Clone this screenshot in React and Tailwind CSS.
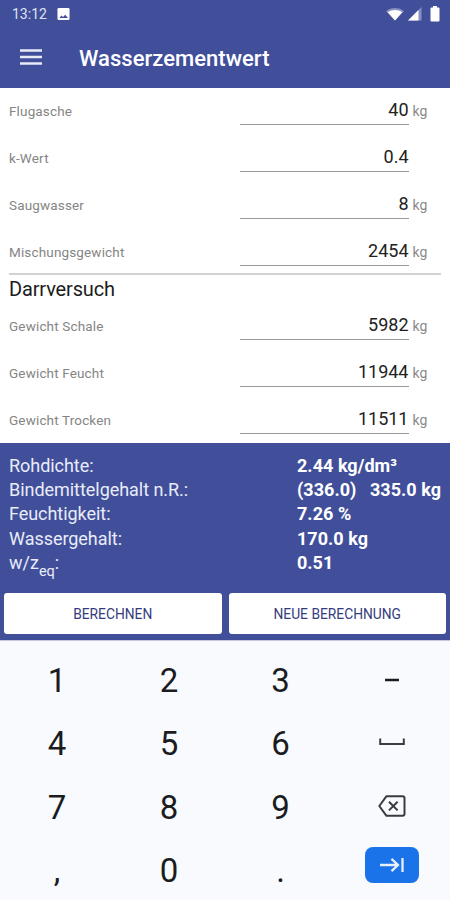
import React, { useState } from "react";

const mischung = [
  { label: "Flugasche", wert: "40", einheit: "kg" },
  { label: "k-Wert", wert: "0.4", einheit: "" },
  { label: "Saugwasser", wert: "8", einheit: "kg" },
  { label: "Mischungsgewicht", wert: "2454", einheit: "kg" },
];

const darrversuch = [
  { label: "Gewicht Schale", wert: "5982", einheit: "kg" },
  { label: "Gewicht Feucht", wert: "11944", einheit: "kg" },
  { label: "Gewicht Trocken", wert: "11511", einheit: "kg" },
];

const ergebnisse = [
  { label: "Rohdichte:", wert: "2.44 kg/dm³" },
  { label: "Bindemittelgehalt n.R.:", wert: "(336.0)   335.0 kg" },
  { label: "Feuchtigkeit:", wert: "7.26 %" },
  { label: "Wassergehalt:", wert: "170.0 kg" },
];

function StatusBar() {
  return (
    <div className="flex h-7 items-center justify-between pl-3 pr-[10px] text-white">
      <div className="flex items-center gap-[10px]">
        <span className="text-[14px] leading-7 text-[#dfe3f3]">13:12</span>
        <svg width="13" height="14" viewBox="0 0 14 14" className="mb-px">
          <rect x="0.5" y="0.5" width="13" height="13" rx="1.5" fill="#fff" />
          <path d="M2.500 11.300l2.400-2.600 1.600 1.500L8.900 7.800 11.800 11.300z" fill="#414f9b" />
        </svg>
      </div>
      <div className="flex items-center">
        <svg width="18" height="14" viewBox="0 0 18 14">
          <path d="M0 4.200C5 0 13 0 18 4.200L9 13.500z" fill="#8790c0" />
          <path d="M1.800 5.300C6 2.300 12 2.300 16.200 5.300L9 13.500z" fill="#fff" />
        </svg>
        <svg width="14" height="14" viewBox="0 0 14 14" className="ml-1">
          <path d="M0 13.500L13.500 0v13.500z" fill="#8790c0" />
          <path d="M0 13.500L10.500 3v10.500z" fill="#fff" />
        </svg>
        <svg width="10" height="16" viewBox="0 0 10 16" className="ml-2">
          <path d="M3 0h4v1.500h1.500a1 1 0 0 1 1 1V14.500a1 1 0 0 1-1 1h-7a1 1 0 0 1-1-1V2.500a1 1 0 0 1 1-1H3z" fill="#fff" />
        </svg>
      </div>
    </div>
  );
}

function Feld({ label, wert, einheit }) {
  return (
    <div className="flex h-[47px] items-start pl-[9px]">
      <label className="w-[231px] pt-[11px] text-[13.500px] leading-6 tracking-[0.15px] text-[#858585]">{label}</label>
      <div className="h-[37px] w-[168.500px] border-b border-[#999] pt-[10px] text-right text-[18px] leading-6 text-[#222]">
        {wert}
      </div>
      <span className="pl-[4px] pt-[11px] text-[14px] leading-6 text-[#8a8a8a]">{einheit}</span>
    </div>
  );
}

function Taste({ children }) {
  return <button className="flex items-center justify-center text-[33px] leading-none text-[#1b1c1e]">{children}</button>;
}

export default function App() {
  const [felder] = useState(mischung);

  return (
    <div className="flex h-[900px] w-[450px] flex-col overflow-hidden bg-white font-[Roboto,sans-serif]">
      <header className="h-[88px] bg-[#414f9b]">
        <StatusBar />
        <div className="flex h-[60px] items-center pl-5">
          <svg width="22" height="16" viewBox="0 0 22 16" className="mb-[3px]">
            <path d="M0 1.500h22M0 8h22M0 14.500h22" stroke="#e8ebf7" strokeWidth="2.400" />
          </svg>
          <h1 className="pl-[37px] pt-[2px] text-[22px] font-medium leading-[60px] tracking-[0.03px] text-white">Wasserzementwert</h1>
        </div>
      </header>

      <main className="h-[355px]">
        {felder.map((f) => (
          <Feld key={f.label} {...f} />
        ))}
        <div className="ml-[9px] mr-[9px] -mt-[3px] border-t-2 border-[#d2d2d2]" />
        <h2 className="h-[28px] pl-[9px] pt-px text-[20px] leading-[26px] tracking-[-0.15px] text-[#1c1c1c]">Darrversuch</h2>
        {darrversuch.map((f) => (
          <Feld key={f.label} {...f} />
        ))}
      </main>

      <section className="h-[197px] bg-[#414f9b] text-white">
        <div className="h-[150px] pl-[9px] pt-[11px] text-[18px]">
          {ergebnisse.map((e) => (
            <div key={e.label} className="flex h-[24.200px] leading-[24px]">
              <span className="w-[288px] tracking-[-0.04px] text-[#e9ecf8]">{e.label}</span>
              <span className="whitespace-pre font-bold tracking-[0.04px]">{e.wert}</span>
            </div>
          ))}
          <div className="flex h-[24px] leading-[24px]">
            <span className="w-[288px] text-[#e9ecf8]">
              w/z<sub className="bottom-[-7px] text-[14.500px]">eq</sub>:
            </span>
            <span className="font-bold">0.51</span>
          </div>
        </div>
        <div className="flex gap-[7px] px-1 text-[13.800px] text-[#353c7d]">
          <button className="h-[41px] w-[218px] rounded-[3px] bg-white pt-[2px]">BERECHNEN</button>
          <button className="h-[41px] w-[218px] rounded-[3px] bg-white pt-[2px]">NEUE BERECHNUNG</button>
        </div>
      </section>

      {/* Zahlentastatur */}
      <div className="grid h-[260px] grid-cols-[112px_112px_111px_112px] grid-rows-[63px_63px_64px_63px] border-t border-[#c3c8df] bg-[#f8fafd] pl-[1px] pt-[8px]">
        <Taste>1</Taste>
        <Taste>2</Taste>
        <Taste>3</Taste>
        <Taste>
          <svg width="14" height="4" viewBox="0 0 14 4" className="mb-[2px]">
            <path d="M0 2h14" stroke="#1b1c1e" strokeWidth="2.500" />
          </svg>
        </Taste>
        <Taste>4</Taste>
        <Taste>5</Taste>
        <Taste>6</Taste>
        <Taste>
          <svg width="26" height="8" viewBox="0 0 26 8" className="mb-[3px]">
            <path d="M1.200 0.500v5.600h23.600v-5.600" fill="none" stroke="#3c3d40" strokeWidth="2" />
          </svg>
        </Taste>
        <Taste>7</Taste>
        <Taste>8</Taste>
        <Taste>9</Taste>
        <Taste>
          <svg width="28" height="22" viewBox="0 0 28 22" className="mb-[2px]" fill="none" stroke="#3a3b3e" strokeWidth="2">
            <path d="M8.500 1.200h16a2 2 0 0 1 2 2v15.600a2 2 0 0 1-2 2h-16L1.300 11z" strokeLinejoin="round" />
            <path d="M11 6.800l8.600 8.600M19.600 6.800L11 15.400" />
          </svg>
        </Taste>
        <Taste>,</Taste>
        <Taste>0</Taste>
        <Taste>.</Taste>
        <Taste>
          <span className="mb-[11px] flex h-9 w-[54px] items-center justify-center rounded-lg bg-[#1a73e8]">
            <svg width="26" height="16" viewBox="0 0 26 16" fill="none" stroke="#e6f0fe" strokeWidth="2.300">
              <path d="M1 8h18M12.500 1.800L19 8l-6.500 6.200M23.500 1v14" />
            </svg>
          </span>
        </Taste>
      </div>
    </div>
  );
}
